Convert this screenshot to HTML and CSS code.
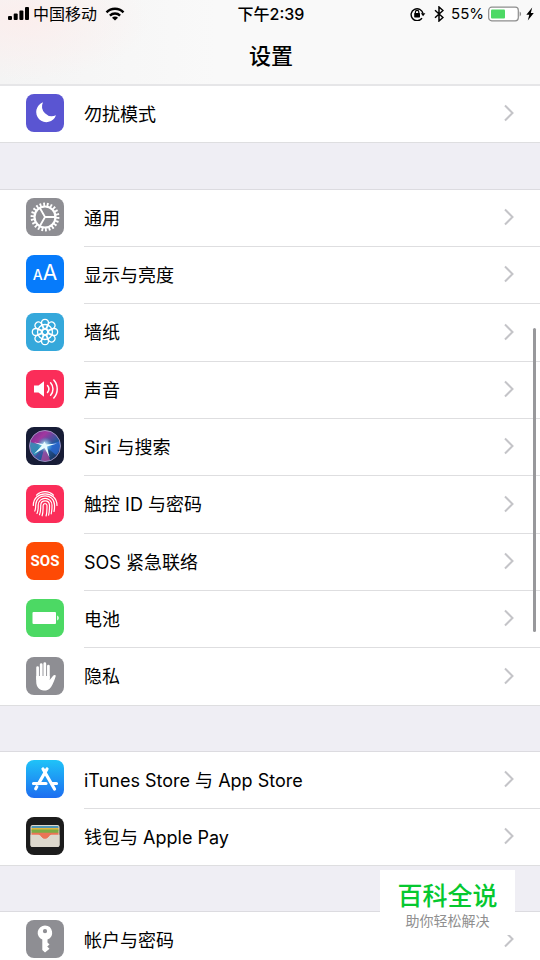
FILE: index.html
```html
<!DOCTYPE html>
<html lang="zh-CN">
<head>
    <meta charset="UTF-8">
    <meta name="viewport" content="width=device-width, initial-scale=1.0">
    <title>设置</title>
    <link rel="stylesheet" href="styles.css">
</head>
<body>
    <svg class="defs" aria-hidden="true">
        <symbol id="chevron" viewBox="0 0 12 18">
            <path d="M2 1.5 9.5 9 2 16.5" fill="none" stroke="#c4c4c8" stroke-width="2"/>
        </symbol>
    </svg>

    <!-- Шапка -->
    <header class="header">
        <div class="status">
            <div class="status-left">
                <svg width="22" height="14" viewBox="0 0 22 14">
                    <rect x="0" y="9" width="4" height="4" rx="1"/>
                    <rect x="5.700" y="6.500" width="4" height="6.500" rx="1"/>
                    <rect x="11.400" y="3.500" width="4" height="9.500" rx="1"/>
                    <rect x="17" y="0" width="4" height="13" rx="1"/>
                </svg>
                <span class="carrier">中国移动</span>
                <svg width="20" height="14" viewBox="0 0 20 14">
                    <g fill="none" stroke="#000" stroke-width="2.4">
                        <path d="M1.5 5.3a12 12 0 0 1 17 0"/>
                        <path d="M4.9 8.6a7.3 7.3 0 0 1 10.2 0"/>
                    </g>
                    <path d="M10 13.6 7 10.7a4.2 4.2 0 0 1 6 0z"/>
                </svg>
            </div>
            <span class="time">下午2:39</span>
            <div class="status-right">
                <svg class="lock" width="16" height="14" viewBox="0 0 16 14">
                    <path d="M12 11.2A6 6 0 1 1 13 6.5" fill="none" stroke="#000" stroke-width="1.4"/>
                    <path d="M10.8 6.2h4.6L13.1 9.2z"/>
                    <rect x="4.2" y="6" width="5.8" height="4.4" rx=".6"/>
                    <path d="M5.4 6.4V5.1a1.7 1.7 0 0 1 3.4 0v1.3" fill="none" stroke="#000" stroke-width="1.2"/>
                </svg>
                <svg class="bluetooth" width="10" height="16" viewBox="0 0 10 16">
                    <path d="M1 4.3 9 11.5 5 15V1l4 3.5-8 7.2" fill="none" stroke="#000" stroke-width="1.5"/>
                </svg>
                <span class="percent">55%</span>
                <svg width="34" height="16" viewBox="0 0 34 16">
                    <rect x=".7" y="1.2" width="29.6" height="13.6" rx="3" fill="#fff" stroke="#8d8d8d" stroke-width="1.2"/>
                    <rect x="3" y="3.4" width="14" height="9.2" rx="1" fill="#4cd964"/>
                    <path d="M31.6 5.6c2 .8 2 4 0 4.8z" fill="#8d8d8d"/>
                </svg>
                <svg width="8" height="14" viewBox="0 0 8 14">
                    <path d="M6.2.5.3 7.8h3L1.8 13.4 7.8 5.9h-3z"/>
                </svg>
            </div>
        </div>
        <h1 class="title">设置</h1>
    </header>

    <!-- Список настроек -->
    <main class="groups">
        <ul class="group first">
            <li><a class="row" href="#dnd">
                <svg class="icon purple" viewBox="0 0 38 38">
                    <path d="M17 8.300A10.200 10.200 0 1 0 30 21.300 9.800 9.800 0 0 1 17 8.300z" fill="#fff"/>
                </svg>
                <span class="label">勿扰模式</span>
                <svg class="chevron"><use href="#chevron"/></svg>
            </a></li>
        </ul>

        <ul class="group">
            <li><a class="row" href="#general">
                <svg class="icon gray" viewBox="0 0 38 38">
                    <g fill="none" stroke="#fff">
                        <circle cx="19" cy="19" r="10.500" stroke-width="2.200"/>
                        <circle cx="19" cy="19" r="12.700" stroke-width="3.400" pathLength="44" stroke-dasharray="1 1"/>
                        <path d="M19 19h10M19 19l-5-8.700M19 19l-5 8.700" stroke-width="1.800"/>
                    </g>
                </svg>
                <span class="label">通用</span>
                <svg class="chevron"><use href="#chevron"/></svg>
            </a></li>
            <li><a class="row" href="#display">
                <span class="icon blue letters"><small>A</small>A</span>
                <span class="label">显示与亮度</span>
                <svg class="chevron"><use href="#chevron"/></svg>
            </a></li>
            <li><a class="row" href="#wallpaper">
                <svg class="icon sky" viewBox="0 0 38 38">
                    <g fill="none" stroke="#fff" stroke-width="1.300">
                        <g id="petals">
                            <path id="petal" d="M19 16.200C14.500 13 14.200 6.300 19 6.300s4.500 6.700 0 9.900z"/>
                            <use href="#petal" transform="rotate(90 19 19)"/>
                            <use href="#petal" transform="rotate(180 19 19)"/>
                            <use href="#petal" transform="rotate(270 19 19)"/>
                        </g>
                        <use href="#petals" transform="rotate(45 19 19)"/>
                        <circle cx="19" cy="19" r="2.800"/>
                        <circle cx="19" cy="19" r="7.500"/>
                    </g>
                </svg>
                <span class="label">墙纸</span>
                <svg class="chevron"><use href="#chevron"/></svg>
            </a></li>
            <li><a class="row" href="#sounds">
                <svg class="icon pink" viewBox="0 0 38 38">
                    <path d="M8 15.500h4.500l5.500-4.200v15.400l-5.500-4.200H8z" fill="#fff"/>
                    <g fill="none" stroke="#fff" stroke-width="1.500" stroke-linecap="round">
                        <path d="M21.500 15.500a5.500 5.500 0 0 1 0 7"/>
                        <path d="M24.600 12.700a9.500 9.500 0 0 1 0 12.600"/>
                        <path d="M27.800 10a13.600 13.600 0 0 1 0 18"/>
                    </g>
                </svg>
                <span class="label">声音</span>
                <svg class="chevron"><use href="#chevron"/></svg>
            </a></li>
            <li><a class="row" href="#siri">
                <svg class="icon navy" viewBox="0 0 38 38">
                    <defs>
                        <linearGradient id="siri-bg" x1="0" y1="0" x2="1" y2="1">
                            <stop offset="0" stop-color="#6a2a86"/>
                            <stop offset=".3" stop-color="#a237a0"/>
                            <stop offset=".6" stop-color="#245a9e"/>
                            <stop offset="1" stop-color="#12213f"/>
                        </linearGradient>
                        <radialGradient id="siri-glow">
                            <stop offset="0" stop-color="#fff"/>
                            <stop offset=".35" stop-color="#a5e9f8" stop-opacity=".7"/>
                            <stop offset="1" stop-color="#2db6d0" stop-opacity="0"/>
                        </radialGradient>
                    </defs>
                    <circle cx="19" cy="19" r="15.500" fill="url(#siri-bg)"/>
                    <path d="M19 19 4 15c-1 7 2 12 5 14z" fill="#18a6bd" opacity=".7"/>
                    <path d="M19 19 34 14c1 6-1 11-4 14z" fill="#2c6ee0" opacity=".7"/>
                    <path d="M19 18 15 33c4 2 8 1 9 0z" fill="#d447a5" opacity=".6"/>
                    <circle cx="19" cy="18" r="8" fill="url(#siri-glow)"/>
                    <path d="M18.500 14.500 20 17.500l11-1-10 3 2.500 11-5-9.500L8 27l8-8.500L8 15.500l9 1.500z" fill="#e9fbff"/>
                    <circle cx="19" cy="19" r="15.500" fill="none" stroke="#a79bc9" stroke-width=".9"/>
                </svg>
                <span class="label">Siri 与搜索</span>
                <svg class="chevron"><use href="#chevron"/></svg>
            </a></li>
            <li><a class="row" href="#touchid">
                <svg class="icon pink" viewBox="0 0 38 38">
                    <g fill="none" stroke="#fff" stroke-width="1.200" stroke-linecap="round">
                        <path d="M10.500 10.200a12 12 0 0 1 17 0"/>
                        <path d="M7.300 20.500c0-15.500 23.700-15.500 23.700 0"/>
                        <path d="M8.800 26c1-2 .8-3.800.9-6 .3-12.300 18.600-12.300 18.800 0 .1 2.500 0 4.500-.5 6.500"/>
                        <path d="M11 28.500c1.400-3 1.200-5.500 1.200-8.300.2-9 13.600-9 13.800 0 0 3 0 5.800-.8 8.600"/>
                        <path d="M13.500 29.800c1.300-3.300 1.200-6.200 1.200-9.400.2-6 8.600-6 8.800 0 0 3.500 0 6.500-.9 9.800"/>
                        <path d="M16.100 30.800c1.200-3.500 1-6.800 1-10.200.1-2.600 3.800-2.600 3.900 0 0 3.800 0 7-.9 10.400"/>
                    </g>
                </svg>
                <span class="label">触控 ID 与密码</span>
                <svg class="chevron"><use href="#chevron"/></svg>
            </a></li>
            <li><a class="row" href="#sos">
                <span class="icon orange sos">SOS</span>
                <span class="label">SOS 紧急联络</span>
                <svg class="chevron"><use href="#chevron"/></svg>
            </a></li>
            <li><a class="row" href="#battery">
                <svg class="icon green" viewBox="0 0 38 38">
                    <rect x="6.500" y="13" width="23.500" height="12" rx="1" fill="#fff"/>
                    <path d="M31.200 16.500c2 .8 2 4.200 0 5z" fill="#fff"/>
                </svg>
                <span class="label">电池</span>
                <svg class="chevron"><use href="#chevron"/></svg>
            </a></li>
            <li><a class="row" href="#privacy">
                <svg class="icon gray" viewBox="0 0 38 38">
                    <g stroke="#fff" stroke-width="2.700" stroke-linecap="round" fill="none">
                        <path d="M11.600 22V10.500M15.200 20V7.500M18.800 20V6.500M22.400 21V9"/>
                    </g>
                    <path d="M10.200 19h13.500v4l3.400-4.200c1-1.200 2.900-.8 2.600.4-.8 3-2.700 7.700-4.300 10.200-1.900 3-4.500 4.200-7.500 4.200-4.500 0-7.700-3.600-7.700-9z" fill="#fff"/>
                </svg>
                <span class="label">隐私</span>
                <svg class="chevron"><use href="#chevron"/></svg>
            </a></li>
        </ul>

        <ul class="group">
            <li><a class="row" href="#store">
                <svg class="icon store" viewBox="0 0 38 38">
                    <g stroke="#fff" stroke-width="3.200" stroke-linecap="round" fill="none">
                        <path d="M17 9 28.500 29"/>
                        <path d="M21 9 12.600 23.500M10.800 26.800 9.700 28.700"/>
                        <path d="M7.500 23.500h12.500M26 23.500h4.500"/>
                    </g>
                </svg>
                <span class="label">iTunes Store 与 App Store</span>
                <svg class="chevron"><use href="#chevron"/></svg>
            </a></li>
            <li><a class="row" href="#wallet">
                <svg class="icon black" viewBox="0 0 38 38">
                    <rect x="4.500" y="8" width="29" height="22" rx="2" fill="#ddd8cd"/>
                    <path d="M5.500 11V10q0-1 1-1h25q1 0 1 1v1z" fill="#4f96b5"/>
                    <path d="M5.500 11h27v3h-27z" fill="#e3b63d"/>
                    <path d="M5.500 12.500h27v3.500h-27z" fill="#7cab44"/>
                    <path d="M5.500 15.800h27v3h-7.500c-2 0-2.500 3.700-6 3.700s-4-3.700-6-3.700H5.500z" fill="#ea7456"/>
                    <path d="M4.500 17.800h8c2.500 0 3 3.800 6.500 3.800s4-3.800 6.500-3.800h8V28a2 2 0 0 1-2 2h-25a2 2 0 0 1-2-2z" fill="#ddd8cd"/>
                    <path d="M13.700 17.300h10.600c-1.300 1-2 4.300-5.300 4.300s-4-3.300-5.300-4.300z" fill="#ea7456"/>
                </svg>
                <span class="label">钱包与 Apple Pay</span>
                <svg class="chevron"><use href="#chevron"/></svg>
            </a></li>
        </ul>

        <ul class="group">
            <li><a class="row" href="#accounts">
                <svg class="icon gray" viewBox="0 0 38 38">
                    <path fill="#fff" fill-rule="evenodd" d="M19 5.500a7.300 7.300 0 0 0-2.700 14.100V30l2.700 2.500 4.500-3.700-2.300-2.200 2.300-2.200-2-2v-2.800A7.300 7.300 0 0 0 19 5.500zm0 3.600a2.100 2.100 0 1 1 0 4.200 2.100 2.100 0 0 1 0-4.200z"/>
                </svg>
                <span class="label">帐户与密码</span>
                <svg class="chevron"><use href="#chevron"/></svg>
            </a></li>
        </ul>
    </main>

    <div class="scrollbar"></div>

    <!-- Плашка в углу -->
    <aside class="badge">
        <strong class="badge-name">百科全说</strong>
        <span class="badge-text">助你轻松解决</span>
    </aside>
</body>
</html>
```
FILE: styles.css
```css
* {
    box-sizing: border-box;
}
body {
    position: relative;
    height: 100vh;
    margin: 0;
    overflow: hidden;
    background-color: #efeef4;
    color: #000;
    font-family: Inter, "Noto Sans CJK SC", sans-serif;
    font-size: 18px;
}
.defs {
    display: none;
}
.header {
    padding: 3px 6px 12px 8px;
    border-bottom: 2px solid #e6e6e8;
    background: radial-gradient(ellipse 130px 60px at 20px 20px, #fbeeed, transparent), linear-gradient(to right, #f4f4f4, #f9f9f9 40%);
}
.status {
    display: grid;
    grid-template-columns: 1fr auto 1fr;
    align-items: center;
    height: 22px;
    font-size: 16px;
    line-height: 22px;
}
.status-left, .status-right {
    display: flex;
    align-items: center;
}
.status-right {
    justify-content: flex-end;
    gap: 4px;
}
.carrier {
    margin: 0 8px 0 3px;
}
.time {
    font-weight: 500;
}
.lock {
    margin-right: 4px;
}
.bluetooth {
    margin-right: 3px;
}
.percent {
    font-size: 15px;
}
.title {
    margin: 15px 0 0;
    font-size: 22px;
    font-weight: 500;
    line-height: 32px;
    text-align: center;
}
.group {
    margin: 0 0 45px;
    padding: 0;
    border-top: 1px solid #dcdbe0;
    background-color: #fff;
    list-style: none;
}
.first {
    margin-bottom: 46px;
    border-top: 0;
}
.group li {
    position: relative;
    height: 57px;
}
.group li:nth-child(3n) {
    height: 58px;
}
/* разделитель начинается под текстом */
.group li::after {
    content: "";
    position: absolute;
    right: 0;
    bottom: 0;
    left: 84px;
    height: 1px;
    background-color: #dedee0;
}
.group li:last-child::after {
    left: 0;
}
.row {
    display: flex;
    align-items: center;
    height: 100%;
    padding: 0 25px 3px 26px;
    color: inherit;
    text-decoration: none;
}
.icon {
    flex: none;
    width: 38px;
    height: 38px;
    margin-right: 20px;
    border-radius: 8px;
    color: #fff;
}
.label {
    flex: 1;
    padding-top: 3px;
    line-height: 26px;
}
.chevron {
    width: 12px;
    height: 18px;
}
.purple {
    background-color: #5a55d2;
}
.gray {
    background-color: #8e8e93;
}
.blue {
    background-color: #067bfb;
}
.sky {
    background-color: #35a8db;
}
.pink {
    background-color: #fb2d59;
}
.navy {
    background-color: #171c36;
}
.orange {
    background-color: #fe4a05;
}
.green {
    background-color: #4cd964;
}
.store {
    background: linear-gradient(#1fc3f8, #1d6df0);
}
.black {
    background-color: #1c1c1c;
}
.letters {
    display: flex;
    align-items: baseline;
    justify-content: center;
    font-size: 21px;
    line-height: 36px;
}
.letters small {
    font-size: 14px;
    font-weight: 500;
}
.sos {
    font-family: Roboto, sans-serif;
    font-size: 15px;
    font-weight: 700;
    line-height: 38px;
    text-align: center;
}
.scrollbar {
    position: absolute;
    top: 328px;
    right: 4px;
    width: 3px;
    height: 304px;
    border-radius: 2px;
    background-color: #98989b;
}
.badge {
    position: absolute;
    right: 25px;
    bottom: 25px;
    display: flex;
    flex-direction: column;
    align-items: center;
    width: 135px;
    padding: 9px 0 6px;
    background-color: #fff;
}
.badge-name {
    color: #06c82f;
    font-size: 25px;
    font-weight: 500;
    line-height: 34px;
}
.badge-text {
    color: #8f8f8f;
    font-size: 14px;
    line-height: 16px;
}
```
